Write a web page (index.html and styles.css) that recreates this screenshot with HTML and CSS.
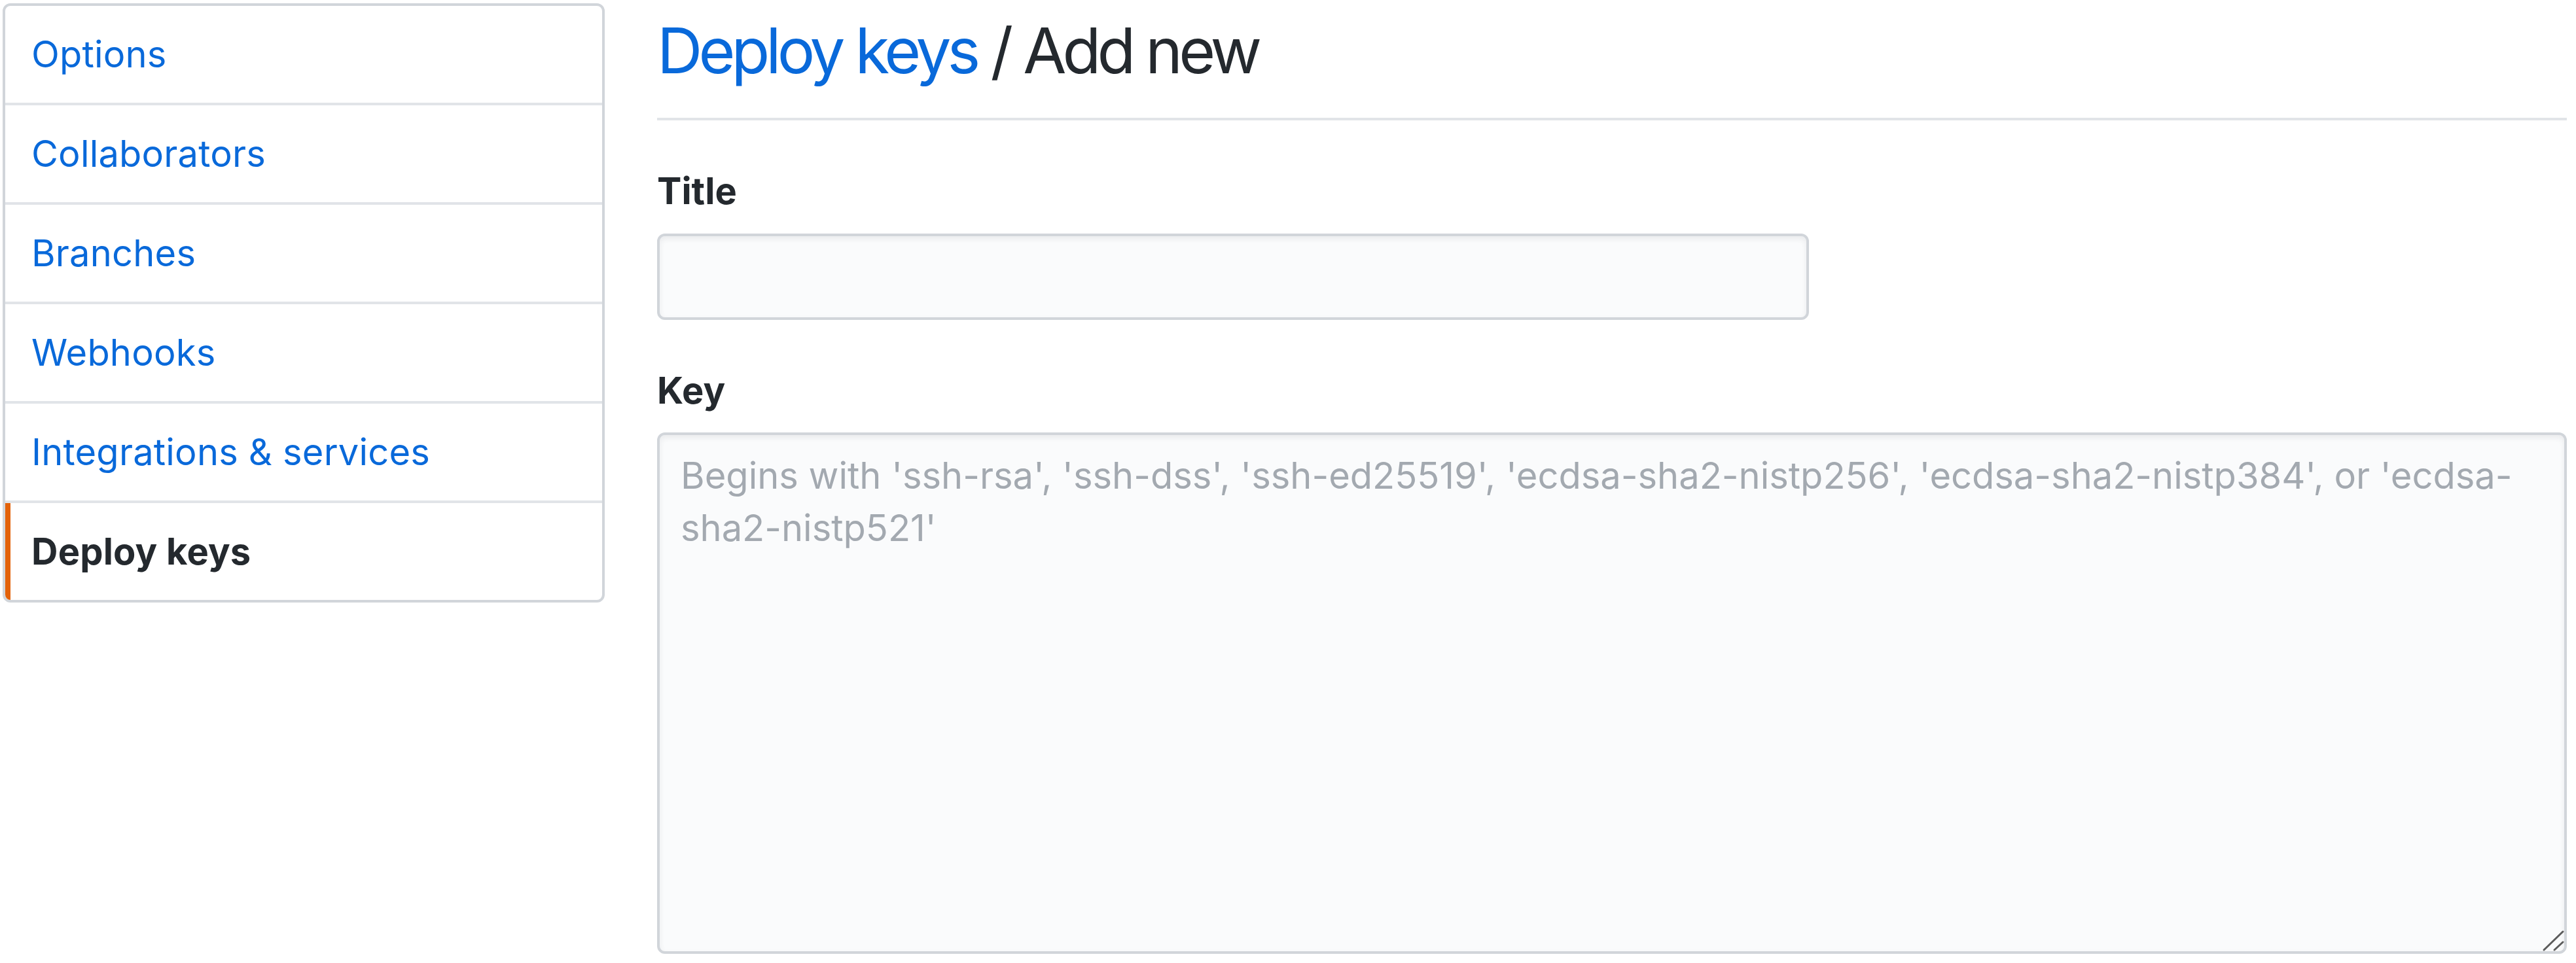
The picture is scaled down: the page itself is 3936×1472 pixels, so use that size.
FILE: index.html
```html
<!DOCTYPE html>
<html lang="en">
<head>
<meta charset="utf-8">
<title>Deploy keys / Add new</title>
<link rel="stylesheet" href="styles.css">
</head>
<body>
<div class="page">
  <nav class="menu">
    <a class="menu-item" href="#">Options</a>
    <a class="menu-item" href="#">Collaborators</a>
    <a class="menu-item" href="#">Branches</a>
    <a class="menu-item" href="#">Webhooks</a>
    <a class="menu-item" href="#">Integrations &amp; services</a>
    <a class="menu-item selected" href="#">Deploy keys</a>
  </nav>
  <main class="content">
    <div class="subhead">
      <h2 class="subhead-heading"><a class="crumb" href="#">Deploy keys</a> / Add new</h2>
    </div>
    <form class="key-form">
      <dl class="form-group form-group-title">
        <dt><label class="form-label" for="title">Title</label></dt>
        <dd><input class="form-control title-input" id="title" type="text"></dd>
      </dl>
      <dl class="form-group form-group-key">
        <dt><label class="form-label" for="key">Key</label></dt>
        <dd>
          <div class="textarea-wrap">
            <textarea class="form-control key-input" id="key" placeholder="Begins with 'ssh-rsa', 'ssh-dss', 'ssh-ed25519', 'ecdsa-sha2-nistp256', 'ecdsa-sha2-nistp384', or 'ecdsa-sha2-nistp521'"></textarea>
            <svg class="resizer" width="40" height="40" viewBox="0 0 40 40" aria-hidden="true">
              <line x1="5" y1="34" x2="34" y2="6" stroke="#5c5c5c" stroke-width="3" stroke-linecap="round"/>
              <line x1="21" y1="34" x2="34" y2="22" stroke="#5c5c5c" stroke-width="3" stroke-linecap="round"/>
            </svg>
          </div>
        </dd>
      </dl>
    </form>
  </main>
</div>
</body>
</html>
```

FILE: styles.css
```css
* {
  box-sizing: border-box;
}

html, body {
  margin: 0;
  padding: 0;
  background: #ffffff;
  overflow: hidden;
}

body {
  font-family: Inter, "Liberation Sans", Arial, sans-serif;
  color: #24292e;
}

.page {
  display: flex;
  align-items: flex-start;
  gap: 80px;
  padding: 5px 14px 0 4px;
}

/* Sidebar menu */
.menu {
  flex: 0 0 920px;
  width: 920px;
  display: flex;
  flex-direction: column;
  border: 4px solid #d1d5da;
  border-radius: 12px;
  overflow: hidden;
  background: #ffffff;
}

.menu-item {
  display: block;
  height: 152px;
  padding: 34px 40px 0 40px;
  font-size: 56px;
  line-height: 80px;
  color: #0969da;
  text-decoration: none;
  border-bottom: 4px solid #e1e4e8;
  letter-spacing: 0.2px;
}

.menu-item.selected {
  height: 148px;
  border-bottom: 0;
  border-left: 8px solid #e36209;
  padding-left: 32px;
  font-weight: 700;
  color: #24292e;
}

/* Main column */
.content {
  flex: 1 1 auto;
  min-width: 0;
}

.subhead {
  border-bottom: 4px solid #e1e4e8;
  padding-bottom: 31px;
  margin-bottom: 68px;
}

.subhead-heading {
  margin: 0;
  font-size: 96px;
  line-height: 144px;
  font-weight: 400;
  letter-spacing: -5.9px;
  color: #24292e;
}

.crumb {
  color: #0969da;
  text-decoration: none;
}

.key-form {
  margin: 0;
}

.form-group {
  margin: 0;
}

.form-group dt,
.form-group dd {
  margin: 0;
}

.form-group-key {
  margin-top: 68px;
}

.form-label {
  display: block;
  font-size: 56px;
  line-height: 80px;
  font-weight: 700;
  color: #24292e;
}

.form-control {
  display: block;
  font-family: Inter, "Liberation Sans", Arial, sans-serif;
  font-size: 56px;
  line-height: 80px;
  color: #24292e;
  background: #fafbfc;
  border: 4px solid #d1d5da;
  border-radius: 12px;
  box-shadow: inset 0 4px 8px rgba(27, 31, 35, 0.075);
  outline: none;
}

.title-input {
  margin-top: 25px;
  width: 1760px;
  height: 132px;
  padding: 0 32px;
}

.textarea-wrap {
  position: relative;
  margin-top: 24px;
  width: 100%;
  height: 797px;
}

.key-input {
  width: 100%;
  height: 797px;
  padding: 22px 32px;
  resize: none;
  overflow: hidden;
}

.key-input::placeholder {
  color: #a3a9b0;
  opacity: 1;
}

.resizer {
  position: absolute;
  right: 0;
  bottom: 0;
  pointer-events: none;
}
```
